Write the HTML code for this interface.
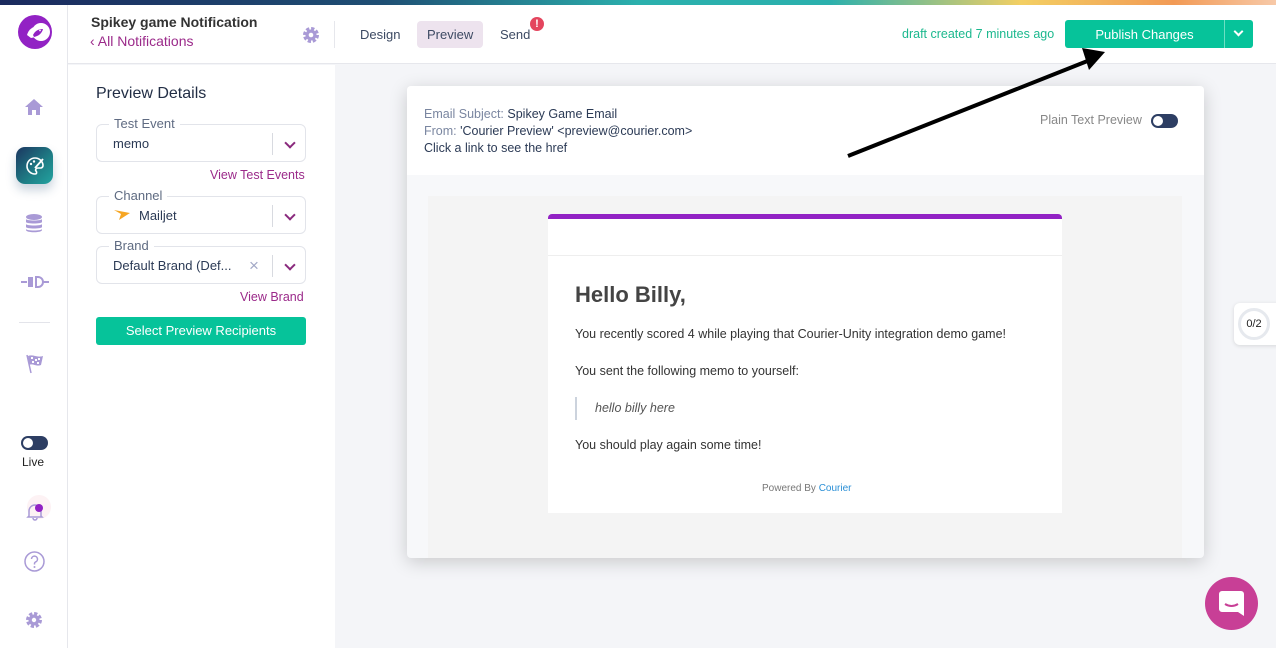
<!DOCTYPE html>
<html><head><meta charset="utf-8"><style>
*{margin:0;padding:0;box-sizing:border-box}
body{width:1276px;height:648px;overflow:hidden;font-family:"Liberation Sans",sans-serif;background:#f4f5f8;position:relative;color:#2b3a55}
.abs{position:absolute}
.stripe{left:0;top:0;width:1276px;height:5px;background:linear-gradient(90deg,#1b2a5e 0%,#1f4f74 30%,#2bb0ad 50%,#2bb0ad 65%,#f3cf63 80%,#f29a55 92%,#f7c9a8 100%)}
.rail{left:0;top:5px;width:68px;height:643px;background:#fff;border-right:1px solid #e6e7ec}
.hdr{left:68px;top:5px;width:1208px;height:59px;background:#fff;border-bottom:1px solid #e6e7ec}
.panel{left:68px;top:65px;width:267px;height:583px;background:#fff}
.fs{position:absolute;left:96px;width:210px;border:1px solid #e2e4ea;border-radius:6px;height:38px}
.fs .lbl{position:absolute;left:12px;top:-9px;background:#fff;padding:0 5px;font-size:13px;color:#5f6b82}
.fs .val{position:absolute;left:16px;top:11px;font-size:13px;color:#2b3a55}
.fs .sep{position:absolute;right:32px;top:8px;width:1px;height:22px;background:#d8dae0}
.chev{position:absolute;right:11px;top:14px;width:8px;height:8px;border-right:2px solid #8a2a7d;border-bottom:2px solid #8a2a7d;transform:rotate(45deg)}
.link{position:absolute;font-size:12.5px;color:#9b2a8a}
.ico{position:absolute;left:24px}
.em{position:absolute;left:575px;font-size:12.5px;color:#333}
</style></head><body>
<div class="abs stripe"></div>
<div class="abs rail"></div>
<div class="abs hdr"></div>
<div class="abs panel"></div>

<!-- logo -->
<svg class="abs" style="left:18px;top:15px" width="34" height="34" viewBox="0 0 34 34"><circle cx="17" cy="17" r="17" fill="#9222c4"/><circle cx="23" cy="17" r="9" fill="#fff"/><path d="M9 20 C11 13 17 10 24 12 C23 17 20 22 13 23 Z" fill="#fff"/><path d="M15 20 C17 16 20 14 25 14 C24 18 21 21 16 22 Z" fill="#9222c4"/><circle cx="22" cy="15.5" r="0.9" fill="#fff"/></svg>
<!-- rail icons -->
<svg class="ico" style="top:98px" width="20" height="18" viewBox="0 0 20 18"><path d="M10 1 L19 9 H16 V17 H12 V12 H8 V17 H4 V9 H1 Z" fill="#a99ad6"/></svg>
<div class="abs" style="left:16px;top:147px;width:37px;height:37px;border-radius:9px;background:linear-gradient(135deg,#1c3660,#1e7f86 60%,#23a3a0);box-shadow:0 6px 10px rgba(40,80,120,.25)"></div>
<svg class="abs" style="left:24px;top:155px" width="22" height="22" viewBox="0 0 22 22"><path d="M11 3 a8 8 0 1 0 0 16 c2 0 2-2 1-3 s0-3 2-3 h3 a3 3 0 0 0 2-3 a8 8 0 0 0-8-7z" fill="none" stroke="#fff" stroke-width="1.6"/><circle cx="7" cy="9" r="1.2" fill="#fff"/><circle cx="10" cy="6.5" r="1.2" fill="#fff"/><path d="M19 4 L11 13" stroke="#fff" stroke-width="1.8"/></svg>
<svg class="ico" style="top:213px;left:25px" width="18" height="20" viewBox="0 0 18 20"><ellipse cx="9" cy="4" rx="8" ry="3" fill="#a99ad6"/><path d="M1 6 v3 c0 2 16 2 16 0 v-3 c0 2-16 2-16 0z M1 11 v3 c0 2 16 2 16 0 v-3 c0 2-16 2-16 0z M1 16 v1 c0 3 16 3 16 0 v-1 c0 2-16 2-16 0z" fill="#a99ad6"/></svg>
<svg class="ico" style="top:276px;left:21px" width="28" height="12" viewBox="0 0 28 12"><path d="M0 6 H6 M22 6 H28" stroke="#a99ad6" stroke-width="2"/><path d="M7 1 H12 V11 H7 Z" fill="#a99ad6"/><path d="M15 1 H17 a5 5 0 0 1 0 10 H15 Z" fill="none" stroke="#a99ad6" stroke-width="2"/></svg>
<div class="abs" style="left:19px;top:322px;width:31px;height:1px;background:#e3e4ea"></div>
<svg class="ico" style="top:353px;left:25px" width="20" height="22" viewBox="0 0 20 22"><path d="M2 2 L6 20" stroke="#a99ad6" stroke-width="1.5"/><path d="M3 3 C8 1 12 5 18 3 L16 12 C11 14 8 10 4 12 Z" fill="#a99ad6"/><path d="M6 4 h2 v2 h-2z M10 6 h2 v2 h-2z M7 8 h2 v2 h-2z M13 5 h2 v2 h-2z M12 9 h2 v2 h-2z" fill="#fff"/></svg>
<div class="abs" style="left:21px;top:436px;width:27px;height:14px;border-radius:7px;background:#2d3e63"></div>
<div class="abs" style="left:23px;top:438px;width:10px;height:10px;border-radius:50%;background:#fff"></div>
<div class="abs" style="left:22px;top:455px;font-size:12px;color:#222">Live</div>
<div class="abs" style="left:27px;top:495px;width:24px;height:24px;border-radius:50%;background:#fdf2f4"></div>
<svg class="ico" style="top:502px;left:26px" width="18" height="20" viewBox="0 0 18 20"><path d="M3 14 V9 a6 6 0 0 1 12 0 V14 L16 15 H2 Z M7 16 a2 2 0 0 0 4 0" fill="none" stroke="#a99ad6" stroke-width="1.5"/><circle cx="13" cy="6" r="4" fill="#9222c4"/></svg>
<svg class="ico" style="top:551px;left:24px" width="21" height="21" viewBox="0 0 21 21"><circle cx="10.5" cy="10.5" r="9.5" fill="none" stroke="#a99ad6" stroke-width="1.5"/><path d="M7.5 8 a3 3 0 1 1 4 3 c-1 .5-1 1-1 2.5" fill="none" stroke="#a99ad6" stroke-width="1.5"/><circle cx="10.5" cy="16" r="1" fill="#a99ad6"/></svg>
<svg class="ico" style="top:611px;left:25px" width="18" height="18" viewBox="0 0 18 18"><circle cx="9" cy="9" r="6" fill="none" stroke="#a99ad6" stroke-width="4" stroke-dasharray="3 1.7"/><circle cx="9" cy="9" r="5.5" fill="#a99ad6"/><circle cx="9" cy="9" r="2.2" fill="#fff"/></svg>

<!-- header -->
<div class="abs" style="left:91px;top:14px;font-size:14px;font-weight:bold;color:#333">Spikey game Notification</div>
<div class="abs" style="left:90px;top:33px;font-size:14px;color:#9b2a8a">‹ All Notifications</div>
<svg class="abs" style="left:302px;top:26px" width="18" height="18" viewBox="0 0 18 18"><circle cx="9" cy="9" r="6" fill="none" stroke="#a99ad6" stroke-width="4" stroke-dasharray="3 1.7"/><circle cx="9" cy="9" r="5.5" fill="#a99ad6"/><circle cx="9" cy="9" r="2.3" fill="#fff"/></svg>
<div class="abs" style="left:334px;top:21px;width:1px;height:27px;background:#e6e7ec"></div>
<div class="abs" style="left:360px;top:27px;font-size:13px;color:#3d4a63">Design</div>
<div class="abs" style="left:417px;top:21px;width:66px;height:27px;border-radius:4px;background:#ede3ee"></div>
<div class="abs" style="left:427px;top:27px;font-size:13px;color:#3d4a63">Preview</div>
<div class="abs" style="left:500px;top:27px;font-size:13px;color:#3d4a63">Send</div>
<div class="abs" style="left:530px;top:17px;width:14px;height:14px;border-radius:50%;background:#e4455e;color:#fff;font-size:11px;font-weight:bold;text-align:center;line-height:14px">!</div>
<div class="abs" style="left:902px;top:27px;font-size:12.5px;color:#1cb88e">draft created 7 minutes ago</div>
<div class="abs" style="left:1065px;top:20px;width:188px;height:28px;border-radius:3px;background:#06c39a"></div>
<div class="abs" style="left:1224px;top:20px;width:1px;height:28px;background:#6ddfc3"></div>
<div class="abs" style="left:1065px;top:27px;width:159px;text-align:center;font-size:13px;color:#fff">Publish Changes</div>
<div class="abs" style="left:1235px;top:28px;width:7px;height:7px;border-right:2px solid #fff;border-bottom:2px solid #fff;transform:rotate(45deg)"></div>

<!-- panel -->
<div class="abs" style="left:96px;top:85px;font-size:16px;color:#222e45">Preview Details</div>
<div class="fs" style="top:124px"><span class="lbl">Test Event</span><span class="val">memo</span><span class="sep"></span><span class="chev"></span></div>
<div class="link" style="left:210px;top:168px">View Test Events</div>
<div class="fs" style="top:196px"><span class="lbl">Channel</span><svg style="position:absolute;left:17px;top:12px" width="16" height="12" viewBox="0 0 16 12"><path d="M0 1 L16 4 L5 11 L7 5 Z" fill="#f6a623"/></svg><span class="val" style="left:42px">Mailjet</span><span class="sep"></span><span class="chev"></span></div>
<div class="fs" style="top:246px"><span class="lbl">Brand</span><span class="val">Default Brand (Def...</span><span style="position:absolute;left:152px;top:9px;font-size:17px;color:#a2a8c6">×</span><span class="sep"></span><span class="chev"></span></div>
<div class="link" style="left:240px;top:290px">View Brand</div>
<div class="abs" style="left:96px;top:317px;width:210px;height:28px;border-radius:3px;background:#06c39a;color:#fff;font-size:13px;text-align:center;line-height:28px">Select Preview Recipients</div>

<!-- preview card -->
<div class="abs" style="left:407px;top:86px;width:797px;height:472px;background:#f7f8fa;border-radius:4px;box-shadow:0 4px 18px rgba(0,0,0,.18)"></div>
<div class="abs" style="left:407px;top:86px;width:797px;height:89px;background:#fff;border-radius:4px 4px 0 0"></div>
<div class="abs" style="left:424px;top:106px;font-size:12.5px;line-height:17px;color:#2b3a55"><span style="color:#7a86a0">Email Subject:</span> Spikey Game Email<br><span style="color:#7a86a0">From:</span> 'Courier Preview' &lt;preview@courier.com&gt;<br>Click a link to see the href</div>
<div class="abs" style="left:1040px;top:113px;font-size:12.5px;color:#888">Plain Text Preview</div>
<div class="abs" style="left:1151px;top:114px;width:27px;height:14px;border-radius:7px;background:#2d3e63"></div>
<div class="abs" style="left:1153px;top:116px;width:10px;height:10px;border-radius:50%;background:#fff"></div>
<div class="abs" style="left:428px;top:196px;width:754px;height:362px;background:#f4f4f4"></div>
<div class="abs" style="left:548px;top:214px;width:514px;height:299px;background:#fff;border-top:5px solid #9222c4;border-radius:4px 4px 0 0"></div>
<div class="abs" style="left:548px;top:255px;width:514px;height:1px;background:#eee"></div>
<div class="abs" style="left:575px;top:282px;font-size:22px;font-weight:bold;color:#444">Hello Billy,</div>
<div class="em" style="top:327px">You recently scored 4 while playing that Courier-Unity integration demo game!</div>
<div class="em" style="top:364px">You sent the following memo to yourself:</div>
<div class="abs" style="left:575px;top:397px;width:2px;height:23px;background:#ccd3dd"></div>
<div class="abs" style="left:595px;top:401px;font-size:12.5px;font-style:italic;color:#555">hello billy here</div>
<div class="em" style="top:438px">You should play again some time!</div>
<div class="abs" style="left:762px;top:483px;font-size:10px;color:#777">Powered By <span style="color:#2a8fd6">Courier</span></div>

<!-- arrow -->
<svg class="abs" style="left:0;top:0" width="1276" height="648"><line x1="848" y1="156" x2="1090" y2="60" stroke="#000" stroke-width="4"/><path d="M1105 52 L1082 48 L1089 70 Z" fill="#000"/></svg>

<!-- side widgets -->
<div class="abs" style="left:1234px;top:303px;width:50px;height:42px;background:#fff;border-radius:6px;box-shadow:0 1px 4px rgba(0,0,0,.12)"></div>
<div class="abs" style="left:1238px;top:308px;width:32px;height:32px;border-radius:50%;border:3px solid #e6e9ee;font-size:11px;text-align:center;line-height:26px;color:#222">0/2</div>
<div class="abs" style="left:1205px;top:577px;width:53px;height:53px;border-radius:50%;background:#c83f96"></div>
<svg class="abs" style="left:1218px;top:590px" width="27" height="27" viewBox="0 0 27 27"><path d="M4 1 H23 a3 3 0 0 1 3 3 V26 L20 22 H4 a3 3 0 0 1-3-3 V4 a3 3 0 0 1 3-3z" fill="#fff"/><path d="M7 14 q6.5 4 13 0" stroke="#c83f96" stroke-width="2" fill="none"/></svg>
</body></html>
